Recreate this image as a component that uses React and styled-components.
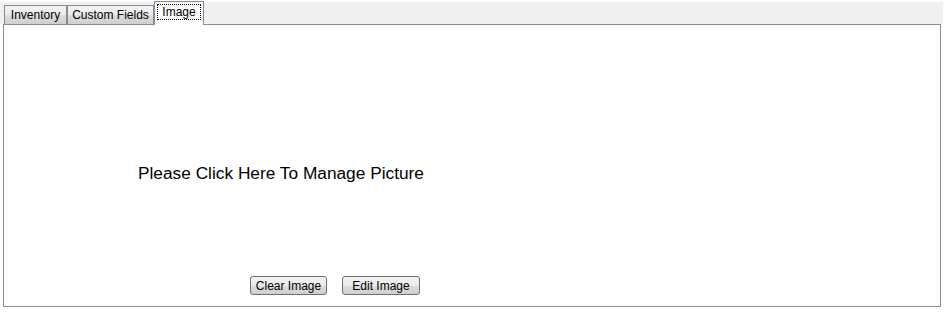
import React, { useState } from 'react';
import styled, { createGlobalStyle } from 'styled-components';

const GlobalStyle = createGlobalStyle`
  html, body {
    margin: 0;
    padding: 0;
    background: #ffffff;
  }
  body {
    font-family: "Liberation Sans", Arial, sans-serif;
  }
`;

const Frame = styled.div`
  width: 943px;
  padding-top: 2px;
`;

const TabStrip = styled.div`
  display: flex;
  align-items: flex-end;
  height: 22px;
  padding-left: 4px;
  background: #f0f0f0;
  position: relative;
  z-index: 1;
`;

const Tab = styled.button`
  font-family: "Liberation Sans", Tahoma, sans-serif;
  font-size: 12px;
  color: #000;
  width: ${(p) => p.$w}px;
  flex: none;
  margin: 0 0 -1px 0;
  padding: ${(p) => (p.$active ? '2px 0 0' : '0')};
  height: ${(p) => (p.$active ? '24px' : '20px')};
  border: 1px solid #898c95;
  border-bottom: ${(p) => (p.$active ? 'none' : '1px solid #898c95')};
  background: ${(p) =>
    p.$active ? '#ffffff' : 'linear-gradient(#f3f3f3, #ebebeb 50%, #dddddd 51%, #cfcfcf)'};
  display: flex;
  justify-content: center;
  align-items: ${(p) => (p.$active ? 'flex-start' : 'center')};
  cursor: default;
`;

const FocusLabel = styled.span`
  outline: ${(p) => (p.$focus ? '1px dotted #000' : 'none')};
  outline-offset: -1px;
  padding: ${(p) => (p.$focus ? '1px 5px' : '0')};
  line-height: 14px;
`;

const Panel = styled.div`
  margin-left: 3px;
  width: 936px;
  height: 281px;
  border: 1px solid #898c95;
  background: #fff;
  display: flex;
  flex-direction: column;
  box-sizing: content-box;
`;

const Message = styled.div`
  font-family: "Liberation Sans", Arial, sans-serif;
  font-size: 17.3px;
  color: #000;
  padding-left: 134px;
  margin-top: 137px;
  line-height: 22px;
`;

const ButtonRow = styled.div`
  display: flex;
  gap: 15px;
  padding-left: 246px;
  margin-top: auto;
  margin-bottom: 11px;
`;

const PushButton = styled.button`
  font-family: "Liberation Sans", Tahoma, sans-serif;
  font-size: 12px;
  color: #000;
  width: ${(p) => p.$w}px;
  height: 19px;
  padding: 0;
  border: 1px solid #707070;
  border-radius: 3px;
  background: linear-gradient(#f2f2f2, #ebebeb 50%, #dddddd 51%, #cfcfcf);
  cursor: default;
`;

const tabs = [
  { name: 'Inventory', w: 63 },
  { name: 'Custom Fields', w: 87 },
  { name: 'Image', w: 50 },
];

export default function App() {
  const [active, setActive] = useState('Image');

  return (
    <>
      <GlobalStyle />
      <Frame>
        <TabStrip>
          {tabs.map((t) => (
            <Tab key={t.name} $w={t.w} $active={active === t.name} onClick={() => setActive(t.name)}>
              <FocusLabel $focus={active === t.name}>{t.name}</FocusLabel>
            </Tab>
          ))}
        </TabStrip>
        <Panel>
          <Message>Please Click Here To Manage Picture</Message>
          <ButtonRow>
            <PushButton $w={77}>Clear Image</PushButton>
            <PushButton $w={78}>Edit Image</PushButton>
          </ButtonRow>
        </Panel>
      </Frame>
    </>
  );
}
